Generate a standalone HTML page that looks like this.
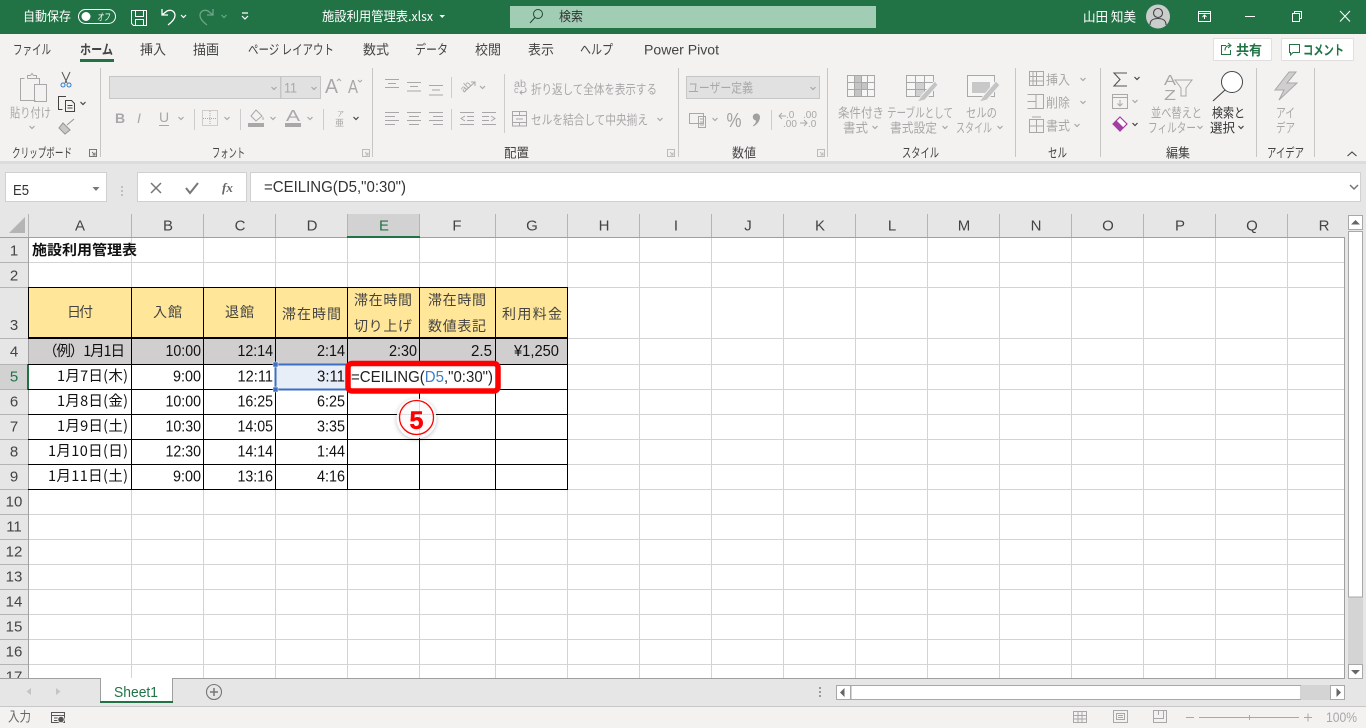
<!DOCTYPE html>
<html lang="ja"><head><meta charset="utf-8"><title>施設利用管理表.xlsx - Excel</title>
<style>
html,body{margin:0;padding:0;width:1366px;height:728px;overflow:hidden;background:#e6e6e6}
svg{display:block;position:absolute;left:0;top:0}
text{font-family:"Liberation Sans","Noto Sans CJK JP",sans-serif}
.j{font-family:"Noto Sans CJK JP","Liberation Sans",sans-serif}
.w{fill:#fff;font-size:13px}
.t{fill:#444;font-size:13.5px}
.d{fill:#a8a8a8;font-size:13px}
.l{fill:#444;font-size:13px}
.h{fill:#444;font-size:15px;text-anchor:middle}
.c{fill:#111;font-size:14.5px}
.r{fill:#111;font-size:15.5px;text-anchor:end}
.i{fill:none;stroke:#a8a8a8;stroke-width:1}
.k{fill:none;stroke:#666;stroke-width:1}
</style></head><body>
<svg width="1366" height="728" viewBox="0 0 1366 728" xmlns="http://www.w3.org/2000/svg">
<defs>
<path id="c" d="M-2.5 -1L0 1.5L2.5 -1" fill="none" stroke-width="1.2"/>
<filter id="sh" x="-30%" y="-30%" width="160%" height="160%"><feDropShadow dx="0" dy="1" stdDeviation="2" flood-color="#000" flood-opacity=".3"/></filter>
</defs>

<!-- title bar -->
<rect width="1366" height="34" fill="#217346"/>
<text class="w j" x="23" y="21" textLength="48" lengthAdjust="spacingAndGlyphs">自動保存</text>
<rect x="78.5" y="9.5" width="37" height="14" rx="7" fill="none" stroke="#fff"/>
<circle cx="86" cy="16.5" r="4.5" fill="#fff"/>
<text class="w j" x="97" y="20.5" style="font-size:10px;font-style:italic" textLength="13" lengthAdjust="spacingAndGlyphs">オフ</text>
<path d="M131.5 10.5H146.5V25.500H133.5L131.5 23.5ZM135.5 10.5V16.5H143.5V10.5M135.5 25.5V19.5H143.5V25.5" fill="none" stroke="#fff"/>
<path d="M162 9V15H168M162 15L167 11C172 9 175 12 175 15.500C175 19 172 22 168 25" fill="none" stroke="#fff" stroke-width="1.300"/>
<use href="#c" x="183.500" y="16" stroke="#fff"/>
<path d="M213 9V15H207M213 15L208 11C203 9 200 12 200 15.500C200 19 203 22 207 25" fill="none" stroke="#6ea587" stroke-width="1.300"/>
<use href="#c" x="224" y="16" stroke="#6ea587"/>
<path d="M242 13H248M242 16L245 19L248 16" fill="none" stroke="#fff" stroke-width="1.200"/>
<text class="w j" x="322" y="21" textLength="111" lengthAdjust="spacingAndGlyphs">施設利用管理表.xlsx</text>
<path d="M439.500 15H445L442.200 18Z" fill="#fff"/>
<rect x="510" y="6" width="366" height="22" fill="#a0cdb4"/>
<circle cx="538" cy="14" r="4.500" fill="none" stroke="#214a35"/><path d="M535 17.500L530 23" stroke="#214a35"/>
<text class="j" x="559" y="21" style="font-size:13px;fill:#333" textLength="24" lengthAdjust="spacingAndGlyphs">検索</text>
<text class="w j" x="1083" y="21.500" textLength="53" lengthAdjust="spacingAndGlyphs">山田 知美</text>
<circle cx="1158" cy="16.500" r="12" fill="#c9cdcb"/>
<circle cx="1158" cy="13" r="4.500" fill="none" stroke="#444" stroke-width="1.100"/>
<path d="M1150 25C1150 20 1153 18.500 1158 18.500C1163 18.500 1166 20 1166 25" fill="none" stroke="#444" stroke-width="1.100"/>
<path d="M1198.500 11.500H1210.500V21.500H1198.500ZM1198.500 13.500H1210.500M1204.500 19V15.500M1202.500 17L1204.500 15L1206.500 17" fill="none" stroke="#fff"/>
<path d="M1245 16.500H1255" stroke="#fff"/>
<path d="M1292.500 13.500H1299.500V21.500H1292.500ZM1294.500 13.500V11.500H1301.500V18.500H1299.500" fill="none" stroke="#fff"/>
<path d="M1340 11L1350 21.500M1350 11L1340 21.500" stroke="#fff"/>

<!-- ribbon -->
<rect y="34" width="1366" height="127" fill="#f3f2f1"/>
<rect y="161" width="1366" height="3" fill="#dcdcdc"/>
<text class="t j" x="13" y="54.500" textLength="38" lengthAdjust="spacingAndGlyphs">ファイル</text>
<text class="j" x="80" y="54.500" style="font-size:13.500px;font-weight:700;fill:#444" textLength="33" lengthAdjust="spacingAndGlyphs">ホーム</text>
<rect x="80" y="59" width="34" height="3" fill="#217346"/>
<text class="t j" x="140" y="54.500" textLength="26" lengthAdjust="spacingAndGlyphs">挿入</text>
<text class="t j" x="193" y="54.500" textLength="26" lengthAdjust="spacingAndGlyphs">描画</text>
<text class="t j" x="248" y="54.500" textLength="86" lengthAdjust="spacingAndGlyphs">ページ レイアウト</text>
<text class="t j" x="363" y="54.500" textLength="26" lengthAdjust="spacingAndGlyphs">数式</text>
<text class="t j" x="415" y="54.500" textLength="33" lengthAdjust="spacingAndGlyphs">データ</text>
<text class="t j" x="475" y="54.500" textLength="26" lengthAdjust="spacingAndGlyphs">校閲</text>
<text class="t j" x="528" y="54.500" textLength="26" lengthAdjust="spacingAndGlyphs">表示</text>
<text class="t j" x="580" y="54.500" textLength="33" lengthAdjust="spacingAndGlyphs">ヘルプ</text>
<text x="644" y="54.500" style="font-size:14px;fill:#444" textLength="75" lengthAdjust="spacingAndGlyphs">Power Pivot</text>
<!-- share / comment -->
<rect x="1213.500" y="38.500" width="58" height="22" rx="1" fill="#fff" stroke="#e1dfdd"/>
<path d="M1226 45.500H1221.500V54.500H1230.500V50M1225 50.500C1225 47 1227 45.500 1230 45.500M1228 43L1231 45.500L1228 48" fill="none" stroke="#217346"/>
<text class="j" x="1236" y="55" style="font-size:13.500px;font-weight:700;fill:#217346" textLength="26" lengthAdjust="spacingAndGlyphs">共有</text>
<rect x="1281.500" y="38.500" width="72" height="22" rx="1" fill="#fff" stroke="#e1dfdd"/>
<path d="M1289.500 44.500H1299.500V52.500H1293L1290.500 55V52.500H1289.500Z" fill="none" stroke="#217346"/>
<text class="j" x="1303" y="55" style="font-size:13.500px;font-weight:700;fill:#217346" textLength="41" lengthAdjust="spacingAndGlyphs">コメント</text>

<!-- group separators -->
<path d="M100.500 68V157M372.500 68V157M678.500 68V157M827.500 68V157M1015.500 68V157M1100.500 68V157M1256.500 68V157M1314.500 68V157" stroke="#c8c6c4"/>
<!-- clipboard -->
<path class="i" d="M24.500 78.500H20.500V100.500H35.500M27.500 78.500V75.500H30.500L32 73.500L33.500 75.500H36.500V78.500H39.500V84M27.500 78.500H36.500"/>
<rect class="i" x="34.500" y="84.500" width="12" height="17" fill="#f3f2f1"/>
<text class="d j" x="10" y="117.500" textLength="41" lengthAdjust="spacingAndGlyphs">貼り付け</text>
<use href="#c" x="32" y="127" stroke="#a8a8a8"/>
<path d="M62 72L67 83M70 72L65 83" stroke="#555" fill="none"/>
<circle cx="63" cy="85" r="2" fill="none" stroke="#2b7cd3"/><circle cx="69" cy="85" r="2" fill="none" stroke="#2b7cd3"/>
<path d="M62.500 109.500H58.500V96.500H66M65.500 100.500V111.500H74.500V103.500L71.500 100.500ZM67.500 105.500H72.500M67.500 108H72.500" fill="none" stroke="#444"/>
<use href="#c" x="83" y="103" stroke="#444"/>
<path d="M74 119L67 125M63 123L70 130L65 134L59 128Z" fill="#c8c8c8" stroke="#999" stroke-width="1.100"/>
<text class="l j" x="12" y="157.500" textLength="60" lengthAdjust="spacingAndGlyphs">クリップボード</text>
<path d="M89.500 149.500H96.500V156.500H89.500ZM92 152L95 155M95 152.500V155H92.500" fill="none" stroke="#777"/>
<!-- font -->
<rect x="109.500" y="76.500" width="171" height="22" fill="#e1e1e1" stroke="#c6c6c6"/>
<rect x="281" y="76.500" width="39.500" height="22" fill="#e1e1e1" stroke="#c6c6c6"/>
<use href="#c" x="274" y="88" stroke="#a8a8a8"/><use href="#c" x="314" y="88" stroke="#a8a8a8"/>
<text x="284" y="92.500" style="font-size:14px;fill:#a8a8a8" textLength="13" lengthAdjust="spacingAndGlyphs">11</text>
<text x="325" y="93" style="font-size:20px;fill:#a8a8a8" textLength="13" lengthAdjust="spacingAndGlyphs">A</text><path class="i" d="M337 81L339 79L341 81"/>
<text x="348" y="93" style="font-size:18px;fill:#a8a8a8" textLength="10" lengthAdjust="spacingAndGlyphs">A</text><path class="i" d="M358 80L360 82L362 80"/>
<text x="115" y="123" style="font-size:14px;font-weight:700;fill:#a8a8a8">B</text>
<text x="137" y="123" style="font-size:14px;font-style:italic;fill:#a8a8a8">I</text>
<text x="159" y="122" style="font-size:14px;fill:#a8a8a8">U</text><path class="i" d="M159 125.500H169"/>
<use href="#c" x="181" y="118" stroke="#a8a8a8"/>
<path d="M194.500 109V130M240.500 109V130M323.500 109V130" stroke="#ccc"/>
<path d="M202.500 110.500H217.500V125.500H202.500Z" class="i" stroke-dasharray="1 1"/><path d="M210 111V125M203 118.500H217" class="i" stroke-dasharray="1 1"/>
<use href="#c" x="227" y="118" stroke="#a8a8a8"/>
<path class="i" d="M256 110L251 116L256 121L262 116ZM263 117V120"/><rect x="248" y="123" width="16" height="4" fill="#a8a8a8"/>
<use href="#c" x="273" y="118" stroke="#a8a8a8"/>
<text x="286" y="121" style="font-size:16px;fill:#a8a8a8" textLength="14" lengthAdjust="spacingAndGlyphs">A</text><rect x="285" y="123" width="16" height="4" fill="#a8a8a8"/>
<use href="#c" x="310" y="118" stroke="#a8a8a8"/>
<text class="j" x="337" y="116" style="font-size:7px;fill:#a8a8a8">ア</text><text class="j" x="335" y="126" style="font-size:9px;fill:#a8a8a8">亜</text>
<use href="#c" x="356" y="118" stroke="#444"/>
<text class="l j" x="212" y="157.500" textLength="33" lengthAdjust="spacingAndGlyphs">フォント</text>
<path d="M362.500 149.500H369.500V156.500H362.500ZM365 152L368 155M368 152.500V155H365.500" fill="none" stroke="#bbb"/>
<!-- alignment -->
<path class="i" d="M385 79.500H399M388 83.500H396M385 87.500H399M407 82.500H421M410 86.500H418M407 91H421M429 85.500H443M432 90H440M429 95H443"/>
<path d="M451.500 77V98M451.500 109V130M504.500 74V133" stroke="#ccc"/>
<text transform="translate(464 93) rotate(-45)" style="font-size:10px;fill:#a8a8a8">ab</text>
<path class="i" d="M464 92L475 82M471 82H475V86"/><use href="#c" x="482.500" y="87" stroke="#a8a8a8"/>
<text x="514" y="87" style="font-size:10px;fill:#a8a8a8" textLength="12" lengthAdjust="spacingAndGlyphs">ab</text>
<text x="514" y="93" style="font-size:9px;fill:#a8a8a8">c</text>
<path class="i" d="M525 87.500C527 90 526 92.500 523 92.500H520M522 90.500L520 92.500L522 94.500"/>
<text class="d j" x="531" y="94" textLength="126" lengthAdjust="spacingAndGlyphs">折り返して全体を表示する</text>
<path class="i" d="M385 112.500H399M385 116.500H395M385 120.500H399M385 124.500H395M407 112.500H421M409 116.500H419M407 120.500H421M409 124.500H419M429 112.500H443M433 116.500H443M429 120.500H443M433 124.500H443"/>
<path class="i" d="M460 112.500H474M467 116.500H474M467 120.500H474M460 124.500H474M465 116L461 118.500L465 121M482 112.500H496M482 116.500H489M482 120.500H489M482 124.500H496M491 116L495 118.500L491 121"/>
<rect class="i" x="512.500" y="111.500" width="14" height="14.500"/><path class="i" d="M512.500 115.500H526.500M512.500 122.500H526.500M516 119H523M519.500 111.500V115.500M519.500 122.500V126"/>
<text class="d j" x="531" y="124.500" textLength="117" lengthAdjust="spacingAndGlyphs">セルを結合して中央揃え</text>
<use href="#c" x="660" y="119" stroke="#a8a8a8"/>
<text class="l j" x="504" y="157.500" textLength="25" lengthAdjust="spacingAndGlyphs">配置</text>
<path d="M667.500 149.500H674.500V156.500H667.500ZM670 152L673 155M673 152.500V155H670.500" fill="none" stroke="#bbb"/>
<!-- number -->
<rect x="686.500" y="76.500" width="133" height="22" fill="#e1e1e1" stroke="#c6c6c6"/>
<text class="d j" x="688" y="92.500" textLength="65" lengthAdjust="spacingAndGlyphs">ユーザー定義</text>
<use href="#c" x="813" y="88" stroke="#a8a8a8"/>
<path class="i" d="M689.500 113.500H703.500V123.500H689.500ZM698.500 116.500H705.500V127.500H698.500ZM700 119H704M700 122H704M700 125H704"/>
<use href="#c" x="715" y="119" stroke="#a8a8a8"/>
<text x="726.500" y="127" style="font-size:20px;fill:#a0a0a0" textLength="15" lengthAdjust="spacingAndGlyphs">%</text>
<path d="M756.500 113.500A3.500 3.500 0 0 1 760 117C760 121 757 124.500 753.500 126.500L753 125.500C755 124 756 122.500 756 120.500A3.500 3.500 0 0 1 756.500 113.500Z" fill="#a0a0a0"/>
<path d="M771.500 110V130" stroke="#ccc"/>
<text x="786" y="118" style="font-size:10px;fill:#a8a8a8">.0</text><text x="783" y="127" style="font-size:10px;fill:#a8a8a8">.00</text><path class="i" d="M779 116H786M782 113L779 116L782 119"/>
<text x="803" y="118" style="font-size:10px;fill:#a8a8a8">.00</text><text x="808" y="127" style="font-size:10px;fill:#a8a8a8">.0</text><path class="i" d="M800 123H807M804 120L807 123L804 126"/>
<text class="l j" x="732" y="157.500" textLength="24" lengthAdjust="spacingAndGlyphs">数値</text>
<path d="M817.500 149.500H824.500V156.500H817.500ZM820 152L823 155M823 152.500V155H820.500" fill="none" stroke="#bbb"/>
<!-- styles -->
<rect x="847.500" y="75.500" width="27" height="21" fill="#fff" fill-opacity=".3" stroke="#a8a8a8"/>
<path d="M854 76H861V82H867V89H861V96H854Z" fill="#c4c4c4"/>
<path class="i" d="M847.500 82.500H874.500M847.500 89.500H874.500M854.500 75.500V96.500M861.500 75.500V96.500M867.500 75.500V96.500"/>
<rect x="906.500" y="75.500" width="27" height="21" fill="#fff" fill-opacity=".3" stroke="#a8a8a8"/>
<path d="M915 83H924V96H915Z" fill="#d0d0d0"/>
<path class="i" d="M906.500 82.500H933.500M906.500 89.500H933.500M915.500 75.500V96.500M924.500 75.500V96.500"/>
<path d="M935 81L922 95L917 102L925 100L938 85Z" fill="#c4c4c4" stroke="#f3f2f1"/>
<rect x="967.500" y="75.500" width="27" height="21" fill="#fff" fill-opacity=".3" stroke="#a8a8a8"/>
<rect x="972" y="82" width="18" height="11" fill="#c8c8c8"/>
<path d="M996 81L984 95L979 102L987 100L1000 85Z" fill="#c4c4c4" stroke="#f3f2f1"/>
<text class="d j" x="838" y="117.500" textLength="46" lengthAdjust="spacingAndGlyphs">条件付き</text>
<text class="d j" x="843" y="132.500" textLength="25" lengthAdjust="spacingAndGlyphs">書式</text><use href="#c" x="875" y="127" stroke="#a8a8a8"/>
<text class="d j" x="887" y="117.500" textLength="66" lengthAdjust="spacingAndGlyphs">テーブルとして</text>
<text class="d j" x="890" y="132.500" textLength="47" lengthAdjust="spacingAndGlyphs">書式設定</text><use href="#c" x="945" y="127" stroke="#a8a8a8"/>
<text class="d j" x="966" y="117.500" textLength="31" lengthAdjust="spacingAndGlyphs">セルの</text>
<text class="d j" x="956" y="132.500" textLength="36" lengthAdjust="spacingAndGlyphs">スタイル</text><use href="#c" x="1000" y="127" stroke="#a8a8a8"/>
<text class="l j" x="902" y="157.500" textLength="37" lengthAdjust="spacingAndGlyphs">スタイル</text>
<!-- cells -->
<path class="i" d="M1029.500 71.500H1043.500V85.500H1029.500ZM1036.500 71.500V85.500M1033 71.500V85.500M1029.500 76.500H1043.500M1029.500 81H1043.500"/>
<path class="i" d="M1027.500 94.500H1043.500V108.500H1027.500M1036 94.500V108.500M1027.500 101.500H1036"/>
<path class="i" d="M1029.500 119.500H1043.500V132.500H1029.500ZM1036.500 119.500V132.500M1029.500 126H1043.500M1032 117H1041"/>
<text class="d j" x="1046" y="84.500" textLength="24" lengthAdjust="spacingAndGlyphs">挿入</text><use href="#c" x="1083" y="79" stroke="#a8a8a8"/>
<text class="d j" x="1046" y="107.500" textLength="24" lengthAdjust="spacingAndGlyphs">削除</text><use href="#c" x="1083" y="102" stroke="#a8a8a8"/>
<text class="d j" x="1046" y="130.500" textLength="24" lengthAdjust="spacingAndGlyphs">書式</text><use href="#c" x="1077" y="125" stroke="#a8a8a8"/>
<text class="l j" x="1048" y="157.500" textLength="19" lengthAdjust="spacingAndGlyphs">セル</text>
<!-- editing -->
<path d="M1127 73H1114L1120 79.500L1114 86H1127" fill="none" stroke="#555" stroke-width="1.100"/><use href="#c" x="1137" y="78" stroke="#444"/>
<rect class="i" x="1112.500" y="94.500" width="15" height="14"/><path class="i" d="M1112.500 97.500H1127.500M1120 100V106M1117.500 103.500L1120 106L1122.500 103.500"/><use href="#c" x="1135" y="101" stroke="#a8a8a8"/>
<path d="M1120 117L1127 124L1120 131L1113 124Z" fill="#fff" stroke="#a33ca3" stroke-width="1.200"/><path d="M1113 124L1116.500 120.500L1123.500 127.500L1120 131Z" fill="#a33ca3"/><use href="#c" x="1135" y="124" stroke="#444"/>
<text x="1164" y="85" style="font-size:15px;fill:#a8a8a8" textLength="12" lengthAdjust="spacingAndGlyphs">A</text><text x="1164" y="100" style="font-size:15px;fill:#a8a8a8" textLength="12" lengthAdjust="spacingAndGlyphs">Z</text>
<path class="i" d="M1175 80H1192L1186 88V96H1181V88Z"/>
<text class="d j" x="1151" y="117.500" textLength="51" lengthAdjust="spacingAndGlyphs">並べ替えと</text>
<text class="d j" x="1148" y="132.500" textLength="48" lengthAdjust="spacingAndGlyphs">フィルター</text><use href="#c" x="1200" y="127" stroke="#a8a8a8"/>
<circle cx="1232" cy="82" r="10.500" fill="#fff" stroke="#444"/><path d="M1225 90L1213 101" stroke="#444" stroke-width="1.100"/>
<text class="j" x="1212" y="117.500" style="font-size:13px;fill:#333" textLength="33" lengthAdjust="spacingAndGlyphs">検索と</text>
<text class="j" x="1210" y="132.500" style="font-size:13px;fill:#333" textLength="25" lengthAdjust="spacingAndGlyphs">選択</text><use href="#c" x="1241" y="127" stroke="#444"/>
<text class="l j" x="1166" y="157.500" textLength="24" lengthAdjust="spacingAndGlyphs">編集</text>
<!-- ideas -->
<path d="M1289 72L1275 90H1284L1279 100L1297 83H1287L1296 72Z" fill="#cfcfcf" stroke="#a8a8a8"/>
<text class="d j" x="1276" y="117.500" textLength="19" lengthAdjust="spacingAndGlyphs">アイ</text>
<text class="d j" x="1276" y="132.500" textLength="19" lengthAdjust="spacingAndGlyphs">デア</text>
<text class="l j" x="1267" y="157.500" textLength="37" lengthAdjust="spacingAndGlyphs">アイデア</text>
<path d="M1347.500 156L1352 152L1356.500 156" fill="none" stroke="#444" stroke-width="1.100"/>

<!-- formula bar -->
<rect x="5.500" y="172.500" width="101" height="29" fill="#fff" stroke="#d0d0d0"/>
<text x="13" y="195" style="font-size:15px;fill:#333" textLength="16" lengthAdjust="spacingAndGlyphs">E5</text>
<path d="M92.500 187H99.500L96 191Z" fill="#777"/>
<path d="M122 186V188M122 190V192M122 194V196" stroke="#999"/>
<rect x="137.500" y="172.500" width="109" height="29" fill="#fff" stroke="#d0d0d0"/>
<path d="M151 183L161 193M161 183L151 193" stroke="#777" stroke-width="1.500"/>
<path d="M186 188L190 193L198 183" fill="none" stroke="#777" stroke-width="2"/>
<text x="222" y="192" style="font-family:'Liberation Serif',serif;font-size:13px;font-style:italic;font-weight:700;fill:#666">fx</text>
<rect x="250.500" y="172.500" width="1110" height="29" fill="#fff" stroke="#d0d0d0"/>
<text x="264" y="192" style="font-size:15.500px;fill:#333" textLength="142" lengthAdjust="spacingAndGlyphs">=CEILING(D5,"0:30")</text>
<path d="M1350 185L1354 189L1358 185" fill="none" stroke="#777" stroke-width="1.500"/>

<!-- grid -->
<rect x="0" y="213" width="1345" height="25" fill="#e6e6e6"/>
<rect x="29" y="238" width="1316" height="441" fill="#fff"/>
<path d="M131.500 238V679M203.500 238V679M275.500 238V679M347.500 238V679M419.500 238V679M495.500 238V679M567.500 238V679M639.500 238V679M711.500 238V679M783.500 238V679M855.500 238V679M927.500 238V679M999.500 238V679M1071.500 238V679M1143.500 238V679M1215.500 238V679M1287.500 238V679" stroke="#d4d4d4"/>
<path d="M29 262.500H1345M29 287.500H1345M29 338.500H1345M29 364.500H1345M29 389.500H1345M29 414.500H1345M29 439.500H1345M29 464.500H1345M29 489.500H1345M29 514.500H1345M29 539.500H1345M29 564.500H1345M29 589.500H1345M29 614.500H1345M29 639.500H1345M29 664.500H1345" stroke="#d4d4d4"/>
<!-- headers -->
<rect x="348" y="214" width="72" height="23" fill="#d2d2d2"/>
<path d="M28.500 214V237M131.500 214V237M203.500 214V237M275.500 214V237M347.500 214V237M419.500 214V237M495.500 214V237M567.500 214V237M639.500 214V237M711.500 214V237M783.500 214V237M855.500 214V237M927.500 214V237M999.500 214V237M1071.500 214V237M1143.500 214V237M1215.500 214V237M1287.500 214V237" stroke="#b4b4b4"/>
<path d="M0 237.500H1345M28.500 237V679M1344.500 237V679" stroke="#9f9f9f"/>
<rect x="347" y="236" width="73" height="2" fill="#217346"/>
<path d="M25 217V233H9Z" fill="#b4b4b4"/>
<text class="h" x="80" y="230.500">A</text><text class="h" x="168" y="230.500">B</text><text class="h" x="240" y="230.500">C</text><text class="h" x="312" y="230.500">D</text><text class="h" x="384" y="230.500" style="fill:#217346">E</text><text class="h" x="457" y="230.500">F</text><text class="h" x="532" y="230.500">G</text><text class="h" x="604" y="230.500">H</text><text class="h" x="676" y="230.500">I</text><text class="h" x="748" y="230.500">J</text><text class="h" x="820" y="230.500">K</text><text class="h" x="892" y="230.500">L</text><text class="h" x="964" y="230.500">M</text><text class="h" x="1036" y="230.500">N</text><text class="h" x="1108" y="230.500">O</text><text class="h" x="1180" y="230.500">P</text><text class="h" x="1252" y="230.500">Q</text><text class="h" x="1324" y="230.500">R</text>
<!-- row headers -->
<path d="M0 262.500H28M0 287.500H28M0 338.500H28M0 364.500H28M0 389.500H28M0 414.500H28M0 439.500H28M0 464.500H28M0 489.500H28M0 514.500H28M0 539.500H28M0 564.500H28M0 589.500H28M0 614.500H28M0 639.500H28M0 664.500H28" stroke="#b4b4b4"/>
<rect x="0" y="365" width="28" height="24" fill="#d2d2d2"/>
<rect x="27" y="364" width="2" height="26" fill="#217346"/>
<text class="h" x="14" y="255.500">1</text><text class="h" x="14" y="280.500">2</text><text class="h" x="14" y="330">3</text><text class="h" x="14" y="356.500">4</text><text class="h" x="14" y="381.500" style="fill:#217346">5</text><text class="h" x="14" y="406.500">6</text><text class="h" x="14" y="431.500">7</text><text class="h" x="14" y="456.500">8</text><text class="h" x="14" y="481.500">9</text><text class="h" x="14" y="506.500">10</text><text class="h" x="14" y="531.500">11</text><text class="h" x="14" y="556.500">12</text><text class="h" x="14" y="581.500">13</text><text class="h" x="14" y="606.500">14</text><text class="h" x="14" y="631.500">15</text><text class="h" x="14" y="656.500">16</text><text class="h" x="14" y="681.500">17</text>

<text class="j" x="32" y="255" style="font-size:14px;font-weight:700;fill:#111" textLength="105" lengthAdjust="spacingAndGlyphs">施設利用管理表</text>
<!-- table fills -->
<rect x="29" y="288" width="539" height="50" fill="#ffe699"/>
<rect x="29" y="339" width="539" height="25" fill="#d0cece"/>
<rect x="276" y="365" width="71" height="24" fill="#e8eef8"/>
<!-- table borders -->
<path d="M131.500 287V490M203.500 287V490M275.500 287V490M347.500 287V490M419.500 287V490M495.500 287V490M567.500 287V490M28.500 287V339" stroke="#000"/>
<path d="M28 287.500H568M28 364.500H568M28 389.500H568M28 414.500H568M28 439.500H568M28 464.500H568M28 489.500H568" stroke="#000"/>
<rect x="28" y="337" width="540" height="2" fill="#000"/>
<!-- table text -->
<g>
<text class="j" x="67" y="317" style="font-size:14px;fill:#444" textLength="26" lengthAdjust="spacing">日付</text>
<text class="j" x="153" y="317" style="font-size:14px;fill:#444" textLength="29" lengthAdjust="spacing">入館</text>
<text class="j" x="225" y="317" style="font-size:14px;fill:#444" textLength="29" lengthAdjust="spacing">退館</text>
<text class="j" x="282" y="319" style="font-size:14px;fill:#444" textLength="59" lengthAdjust="spacing">滞在時間</text>
<text class="j" x="354" y="305" style="font-size:14px;fill:#444" textLength="58" lengthAdjust="spacing">滞在時間</text>
<text class="j" x="354" y="331" style="font-size:14px;fill:#444" textLength="58" lengthAdjust="spacing">切り上げ</text>
<text class="j" x="428" y="305" style="font-size:14px;fill:#444" textLength="58" lengthAdjust="spacing">滞在時間</text>
<text class="j" x="428" y="331" style="font-size:14px;fill:#444" textLength="58" lengthAdjust="spacing">数値表記</text>
<text class="j" x="502" y="319" style="font-size:14px;fill:#444" textLength="60" lengthAdjust="spacing">利用料金</text>
</g>
<text class="c j" x="43" y="356" textLength="82" lengthAdjust="spacing">（例）1月1日</text>
<text class="r" x="201" y="356" textLength="35.500" lengthAdjust="spacingAndGlyphs">10:00</text><text class="r" x="273" y="356" textLength="35.500" lengthAdjust="spacingAndGlyphs">12:14</text><text class="r" x="345" y="356" textLength="28" lengthAdjust="spacingAndGlyphs">2:14</text><text class="r" x="417" y="356" textLength="28" lengthAdjust="spacingAndGlyphs">2:30</text><text class="r" x="492" y="356" textLength="21" lengthAdjust="spacingAndGlyphs">2.5</text><text x="514" y="356" style="font-size:15.500px;fill:#111" textLength="45" lengthAdjust="spacingAndGlyphs">¥1,250</text>
<text class="c j" x="57" y="381" textLength="71" lengthAdjust="spacing">1月7日(木)</text>
<text class="c j" x="57" y="406" textLength="71" lengthAdjust="spacing">1月8日(金)</text>
<text class="c j" x="57" y="431" textLength="71" lengthAdjust="spacing">1月9日(土)</text>
<text class="c j" x="48" y="456" textLength="80" lengthAdjust="spacing">1月10日(日)</text>
<text class="c j" x="48" y="481" textLength="80" lengthAdjust="spacing">1月11日(土)</text>
<text class="r" x="201" y="381.500" textLength="28" lengthAdjust="spacingAndGlyphs">9:00</text><text class="r" x="273" y="381.500" textLength="35.500" lengthAdjust="spacingAndGlyphs">12:11</text><text class="r" x="345" y="381.500" textLength="28" lengthAdjust="spacingAndGlyphs">3:11</text>
<text class="r" x="201" y="406.500" textLength="35.500" lengthAdjust="spacingAndGlyphs">10:00</text><text class="r" x="273" y="406.500" textLength="35.500" lengthAdjust="spacingAndGlyphs">16:25</text><text class="r" x="345" y="406.500" textLength="28" lengthAdjust="spacingAndGlyphs">6:25</text>
<text class="r" x="201" y="431.500" textLength="35.500" lengthAdjust="spacingAndGlyphs">10:30</text><text class="r" x="273" y="431.500" textLength="35.500" lengthAdjust="spacingAndGlyphs">14:05</text><text class="r" x="345" y="431.500" textLength="28" lengthAdjust="spacingAndGlyphs">3:35</text>
<text class="r" x="201" y="456.500" textLength="35.500" lengthAdjust="spacingAndGlyphs">12:30</text><text class="r" x="273" y="456.500" textLength="35.500" lengthAdjust="spacingAndGlyphs">14:14</text><text class="r" x="345" y="456.500" textLength="28" lengthAdjust="spacingAndGlyphs">1:44</text>
<text class="r" x="201" y="481.500" textLength="28" lengthAdjust="spacingAndGlyphs">9:00</text><text class="r" x="273" y="481.500" textLength="35.500" lengthAdjust="spacingAndGlyphs">13:16</text><text class="r" x="345" y="481.500" textLength="28" lengthAdjust="spacingAndGlyphs">4:16</text>
<!-- selection -->
<rect x="275.500" y="364.500" width="72" height="25" fill="none" stroke="#3a6fc4" stroke-width="2"/>
<rect x="273" y="362" width="5" height="5" fill="#3a6fc4" stroke="#fff" stroke-width=".5"/><rect x="273" y="387" width="5" height="5" fill="#3a6fc4" stroke="#fff" stroke-width=".5"/>
<!-- red callout -->
<rect x="348" y="363.500" width="150" height="27.500" rx="4" fill="#fff" stroke="#ff0000" stroke-width="5.500"/>
<text x="351" y="382" style="font-size:15.500px;fill:#222" textLength="142" lengthAdjust="spacingAndGlyphs">=CEILING(<tspan fill="#3d7fc9">D5</tspan>,"0:30")</text>
<circle cx="416.500" cy="418.500" r="20" fill="#fff" fill-opacity=".85" filter="url(#sh)"/>
<circle cx="416.500" cy="417.500" r="17" fill="none" stroke="#ff0000" stroke-width="1.300"/>
<text x="416.500" y="429" text-anchor="middle" style="font-size:25px;font-weight:700;fill:#ff0000" stroke="#ff0000" stroke-width=".5">5</text>

<!-- sheet bar -->
<rect x="0" y="679" width="1366" height="27" fill="#e6e6e6"/>
<path d="M0 678.500H1345" stroke="#9f9f9f"/>
<path d="M31 688V695L26.500 691.500ZM60 688V695L55.500 691.500" fill="none"/>
<path d="M31 688V695L26.500 691.500ZM56 688V695L60.500 691.500Z" fill="#c4c4c4"/>
<path d="M100.500 678V702M172.500 678V702" stroke="#9f9f9f"/>
<rect x="101" y="678" width="71" height="24" fill="#fff"/>
<rect x="100" y="701" width="73" height="2" fill="#217346"/>
<text x="114" y="697" style="font-size:15px;fill:#217346" textLength="44" lengthAdjust="spacingAndGlyphs">Sheet1</text>
<circle cx="214" cy="692" r="7.500" fill="none" stroke="#777" stroke-width="1.100"/><path d="M210 692H218M214 688V696" stroke="#777" stroke-width="1.500"/>
<path d="M820 687V689M820 691V693M820 695V697" stroke="#999" stroke-width="2"/>
<rect x="836.500" y="685.500" width="14" height="14" fill="#fff" stroke="#a8a8a8"/><path d="M844.500 688V697L840 692.500Z" fill="#666"/>
<rect x="851" y="685.500" width="450" height="14" fill="#fff" stroke="#a8a8a8" stroke-width="1"/>
<rect x="1301" y="685" width="29" height="15" fill="#d4d4d4"/>
<rect x="1330.500" y="685.500" width="14" height="14" fill="#fff" stroke="#a8a8a8"/><path d="M1336.500 688V697L1341 692.500Z" fill="#666"/>
<!-- vertical scrollbar -->
<rect x="1348" y="231" width="15" height="433" fill="#d4d4d4"/>
<rect x="1348.500" y="231.500" width="14" height="365.500" fill="#fff" stroke="#a8a8a8"/>
<rect x="1348.500" y="215.500" width="14" height="14" fill="#fff" stroke="#a8a8a8"/><path d="M1351 224.500H1360L1355.500 220Z" fill="#666"/>
<rect x="1348.500" y="664.500" width="14" height="14" fill="#fff" stroke="#a8a8a8"/><path d="M1351 670H1360L1355.500 674.500Z" fill="#666"/>
<!-- status bar -->
<rect x="0" y="706" width="1366" height="22" fill="#f3f2f1"/>
<path d="M0 706.500H1366" stroke="#c8c8c8"/>
<text class="j" x="8" y="721.500" style="font-size:13.500px;fill:#666" textLength="23" lengthAdjust="spacingAndGlyphs">入力</text>
<path d="M51.500 712.500H64.500V722.500H51.500ZM51.500 715.500H64.500M54 718H58M54 720.500H58" fill="none" stroke="#555"/><circle cx="61" cy="719.500" r="3.300" fill="#555" stroke="#f3f2f1"/>
<path class="i" d="M1073.500 711.500H1086.500V722.500H1073.500ZM1073.500 715.500H1086.500M1073.500 719H1086.500M1078 711.500V722.500M1082 711.500V722.500"/>
<path class="i" d="M1113.500 710.500H1127.500V722.500H1113.500ZM1116.500 713.500H1124.500V719.500H1116.500ZM1118 715.500H1123M1118 717.500H1123"/>
<path class="i" d="M1153.500 710.500H1166.500V722.500H1153.500ZM1153.500 718.500H1163.500V710.500M1158.500 710.500V715"/>
<path d="M1186 717.500H1194M1199 717.500H1299M1304 717.500H1312M1308 713.500V721.500M1249.500 715V720" stroke="#a8a8a8" fill="none"/>
<text x="1326" y="722" style="font-size:14px;fill:#a8a8a8" textLength="31" lengthAdjust="spacingAndGlyphs">100%</text>
</svg>
</body></html>
